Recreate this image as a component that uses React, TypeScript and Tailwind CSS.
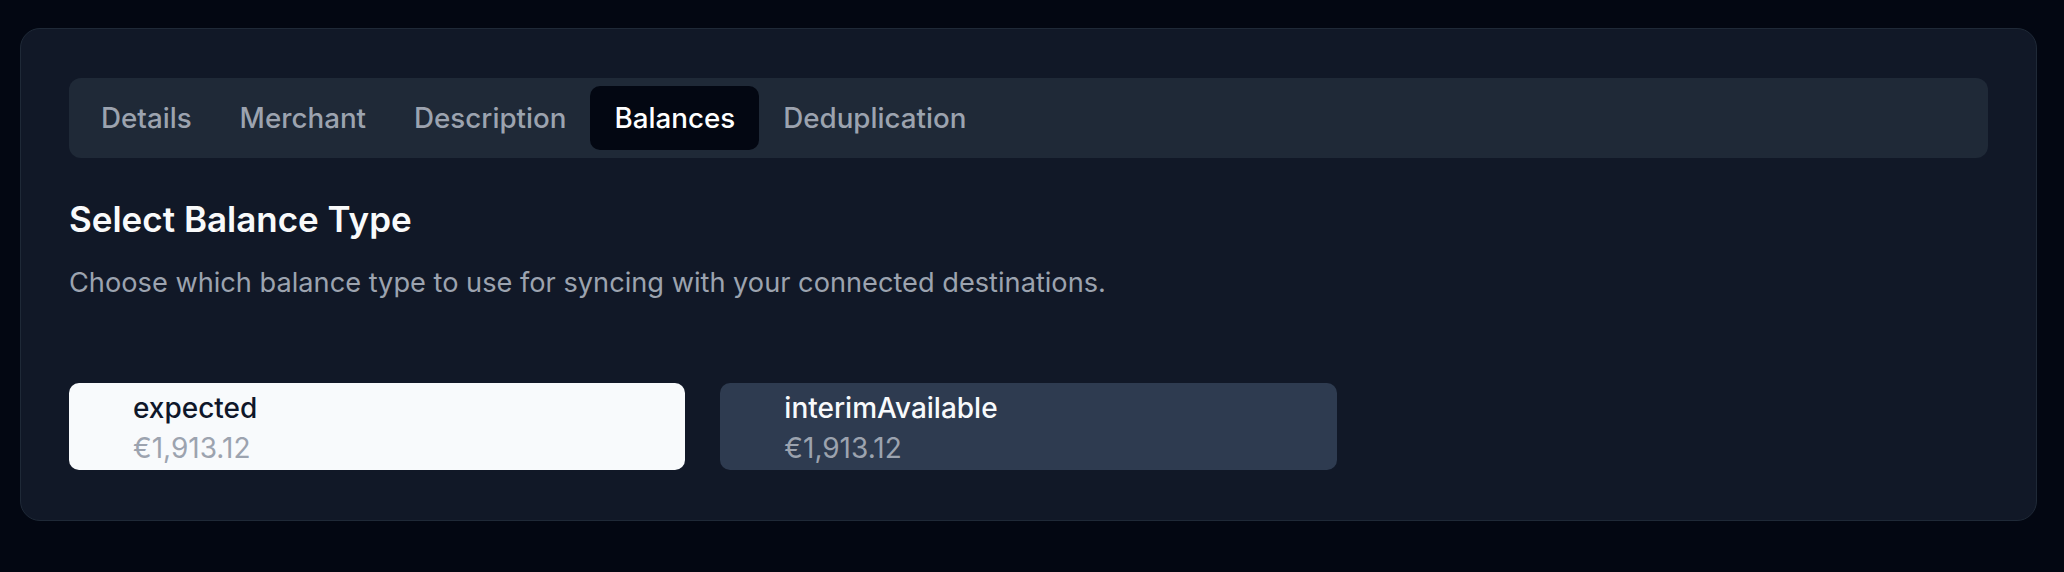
import { useState } from "react";

const tabs = ["Details", "Merchant", "Description", "Balances", "Deduplication"];

const balances = [
  { type: "expected", amount: "€1,913.12" },
  { type: "interimAvailable", amount: "€1,913.12" },
];

export default function App() {
  const [activeTab, setActiveTab] = useState("Balances");
  const [selected, setSelected] = useState("expected");

  return (
    <div
      className="min-h-screen bg-[#030712] pl-5 pr-[27px] pt-[28px]"
      style={{ fontFamily: "Inter, 'Noto Sans', sans-serif" }}
    >
      <div className="rounded-[20px] border border-[#1f2937] bg-[#111827] px-12 pt-[49px] pb-[50px]">
        {/* Tabs */}
        <div className="flex h-20 items-center rounded-xl bg-[#1f2937] p-2">
          {tabs.map((tab) => (
            <button
              key={tab}
              onClick={() => setActiveTab(tab)}
              className={
                activeTab === tab
                  ? "flex h-16 items-center rounded-[10px] bg-[#030712] px-6 text-[27.75px] font-medium leading-[42px] text-white"
                  : "flex h-16 items-center rounded-[10px] px-6 text-[27.75px] font-medium leading-[42px] text-[#9ca3af]"
              }
            >
              {tab}
            </button>
          ))}
        </div>

        {/* Balance type */}
        <h2 className="mt-[37px] text-[35px] font-semibold leading-[49px] text-[#f9fafb]">
          Select Balance Type
        </h2>
        <p className="mt-[18px] text-[27.2px] leading-[42px] text-[#9ca3af]">
          Choose which balance type to use for syncing with your connected destinations.
        </p>

        <div className="mt-[79px] grid grid-cols-3 gap-[35px]">
          {balances.map((b) => (
            <button
              key={b.type}
              onClick={() => setSelected(b.type)}
              className={
                selected === b.type
                  ? "flex h-[87px] flex-col items-start rounded-[10px] bg-[#f8fafc] pl-[64px] pt-[5px] text-left"
                  : "flex h-[87px] flex-col items-start rounded-[10px] bg-[#2e3b50] pl-[64px] pt-[5px] text-left"
              }
            >
              <span
                className={
                  selected === b.type
                    ? "text-[28px] font-medium leading-[41px] text-[#0f172a]"
                    : "text-[28px] font-medium leading-[41px] text-[#f8fafc]"
                }
              >
                {b.type}
              </span>
              <span className="text-[28px] leading-[39px] text-[#9ca3af]">{b.amount}</span>
            </button>
          ))}
        </div>
      </div>
    </div>
  );
}
